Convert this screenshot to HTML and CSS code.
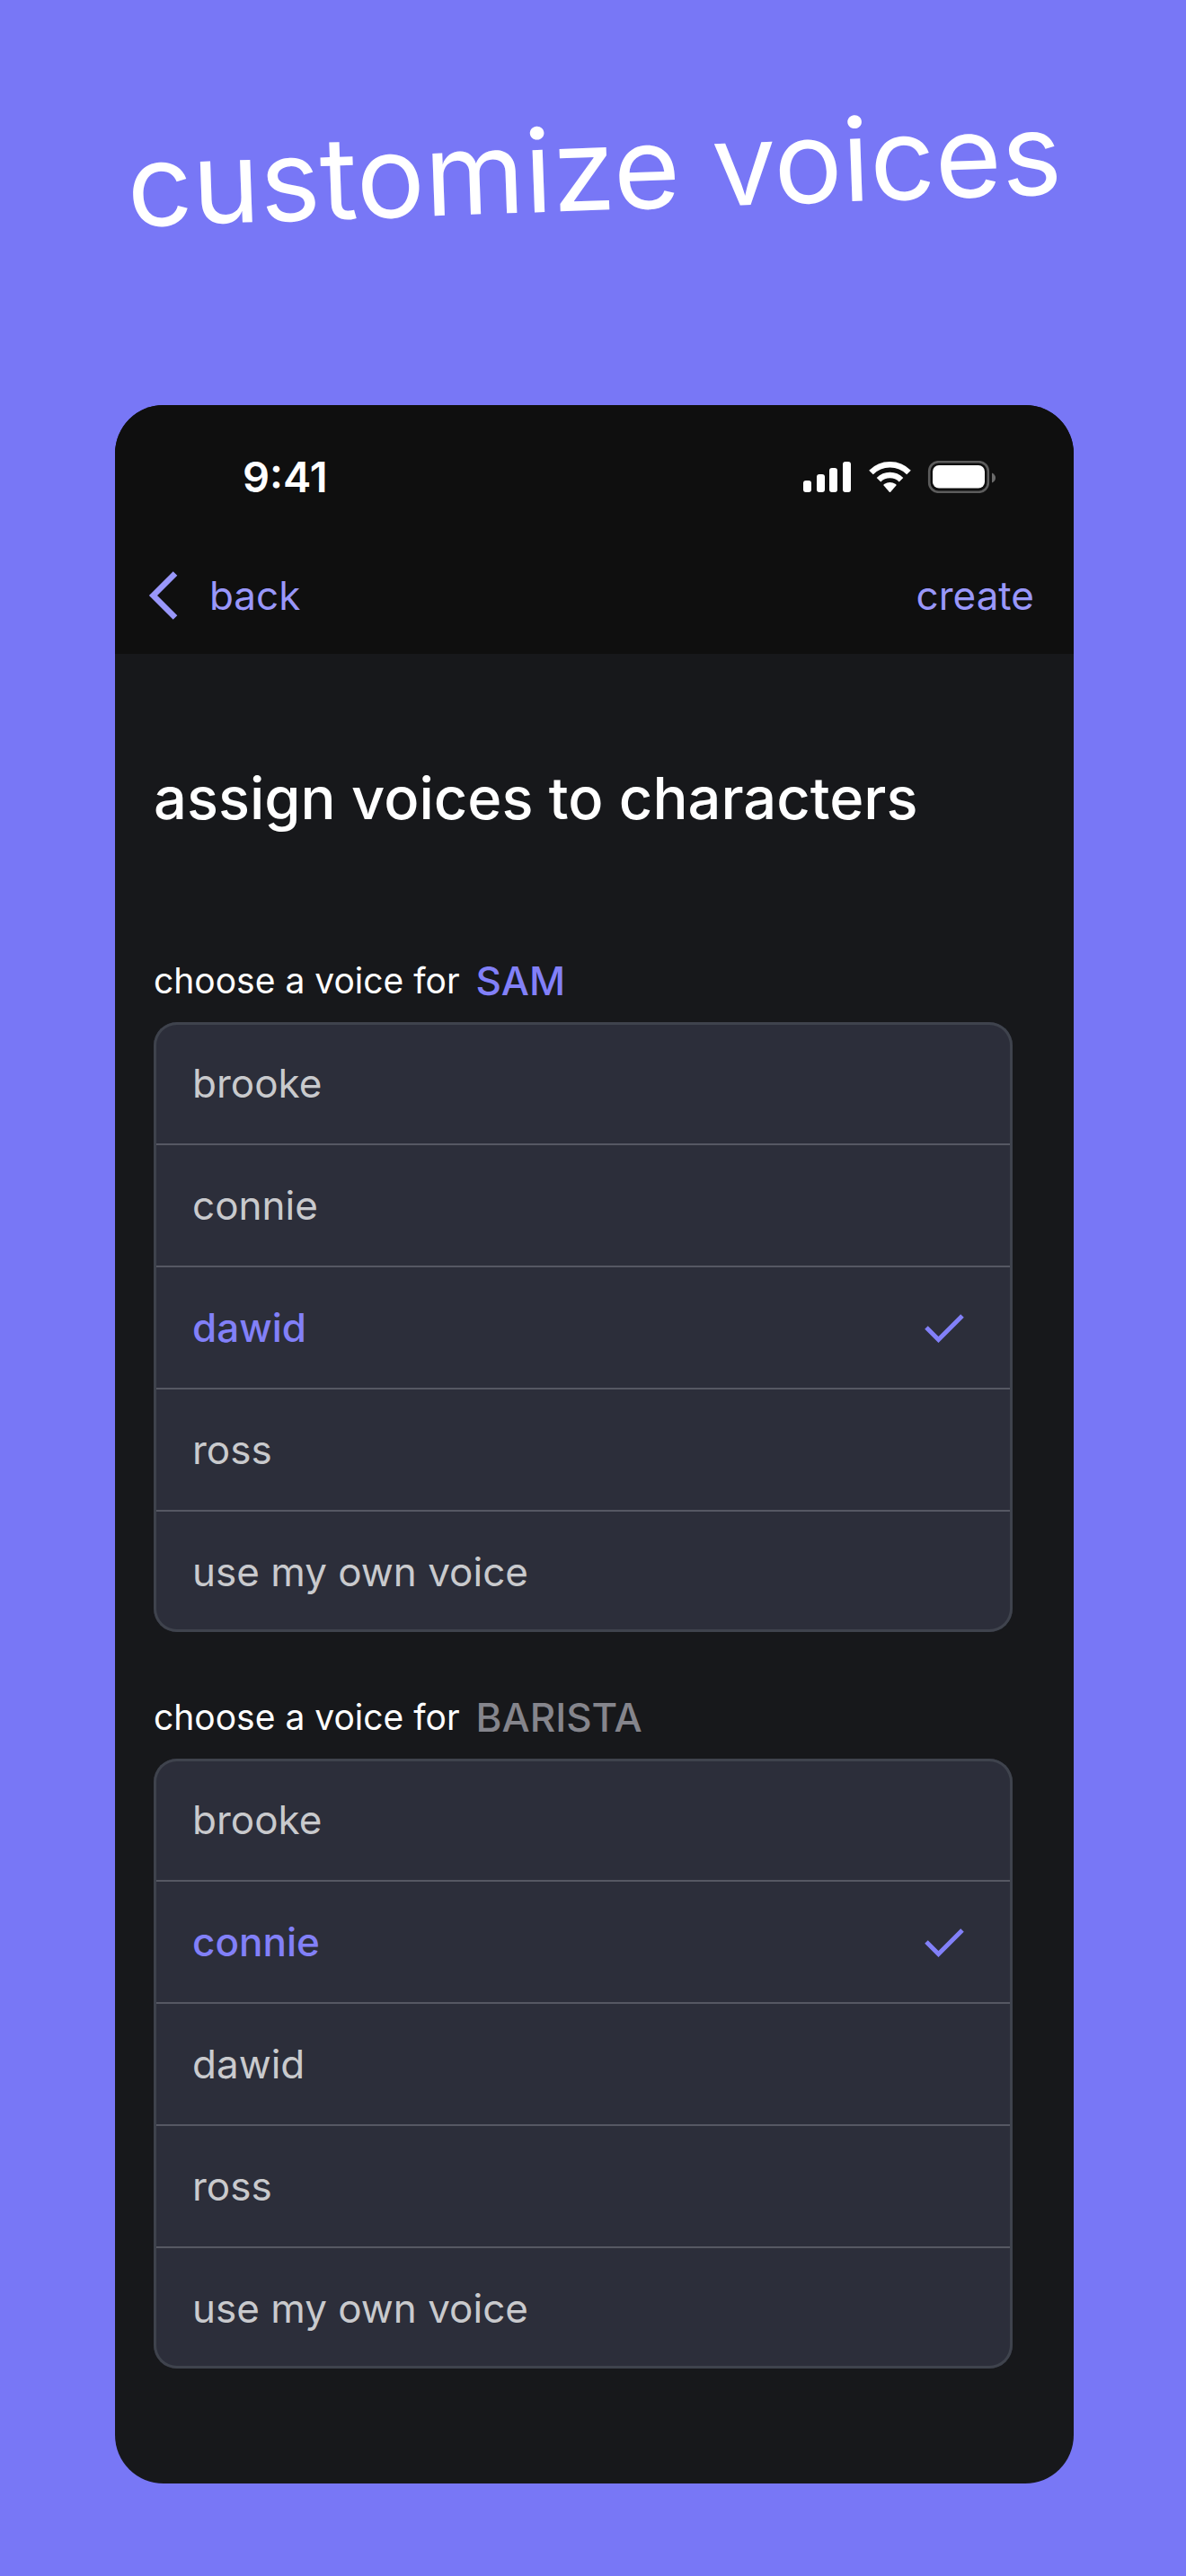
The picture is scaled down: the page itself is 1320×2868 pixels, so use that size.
FILE: index.html
```html
<!DOCTYPE html>
<html lang="en">
<head>
<meta charset="UTF-8">
<meta name="viewport" content="width=device-width, initial-scale=1.0">
<title>customize voices</title>
<link rel="stylesheet" href="styles.css">
</head>
<body>

<h1 class="headline">customize voices</h1>

<main class="phone">
  <header class="topbar">
    <div class="status">
      <span class="time">9:41</span>
      <svg class="status-icons" width="214" height="36" viewBox="0 0 214 36" aria-hidden="true">
        <g fill="#fff">
          <rect x="0" y="22" width="9" height="13" rx="3"/>
          <rect x="15" y="15" width="9" height="20" rx="3"/>
          <rect x="29" y="8" width="9" height="27" rx="3"/>
          <rect x="44" y="1" width="9" height="34" rx="3"/>
        </g>
        <g fill="none" stroke="#fff" stroke-width="6.5">
          <path d="M75.500 13A29.500 29.500 0 0 1 117.500 13"/>
          <path d="M84 21.200A17.800 17.800 0 0 1 109 21.200"/>
        </g>
        <path d="M89.600 27.500Q89 26.800 90 26.100Q96.500 22 103 26.100Q104 26.800 103.400 27.500L97.200 34.700Q96.500 35.500 95.800 34.700Z" fill="#fff"/>
        <rect x="140.200" y="1.200" width="65.600" height="33.600" rx="10.500" fill="none" stroke="#5c5c5c" stroke-width="2.600"/>
        <rect x="144" y="5" width="58" height="25.500" rx="7" fill="#fff"/>
        <path d="M210 13.500Q214 15.500 214 19Q214 22.500 210 24.500Z" fill="#6b6b6b"/>
      </svg>
    </div>
    <nav class="actions">
      <a class="action" href="#">
        <svg class="chevron" width="33" height="54" viewBox="0 0 33 54" aria-hidden="true">
          <path d="M30 2.500L5.500 27L30 51.500" fill="none" stroke="currentColor" stroke-width="6.500"/>
        </svg>
        back
      </a>
      <button type="submit" form="voices" class="action">create</button>
    </nav>
  </header>

  <form class="content" id="voices">
    <h2 class="title">assign voices to characters</h2>

    <fieldset class="group">
      <legend class="question">choose a voice for <span class="who active">SAM</span></legend>
      <ul class="voices">
        <li><label class="voice"><input type="radio" name="sam" value="brooke">brooke<svg class="check" width="44" height="34" viewBox="0 0 44 34" aria-hidden="true"><path d="M2 17L15.500 30.500L42 4"/></svg></label></li>
        <li><label class="voice"><input type="radio" name="sam" value="connie">connie<svg class="check" width="44" height="34" viewBox="0 0 44 34" aria-hidden="true"><path d="M2 17L15.500 30.500L42 4"/></svg></label></li>
        <li><label class="voice"><input type="radio" name="sam" value="dawid" checked>dawid<svg class="check" width="44" height="34" viewBox="0 0 44 34" aria-hidden="true"><path d="M2 17L15.500 30.500L42 4"/></svg></label></li>
        <li><label class="voice"><input type="radio" name="sam" value="ross">ross<svg class="check" width="44" height="34" viewBox="0 0 44 34" aria-hidden="true"><path d="M2 17L15.500 30.500L42 4"/></svg></label></li>
        <li><label class="voice"><input type="radio" name="sam" value="own">use my own voice<svg class="check" width="44" height="34" viewBox="0 0 44 34" aria-hidden="true"><path d="M2 17L15.500 30.500L42 4"/></svg></label></li>
      </ul>
    </fieldset>

    <fieldset class="group">
      <legend class="question">choose a voice for <span class="who">BARISTA</span></legend>
      <ul class="voices">
        <li><label class="voice"><input type="radio" name="barista" value="brooke">brooke<svg class="check" width="44" height="34" viewBox="0 0 44 34" aria-hidden="true"><path d="M2 17L15.500 30.500L42 4"/></svg></label></li>
        <li><label class="voice"><input type="radio" name="barista" value="connie" checked>connie<svg class="check" width="44" height="34" viewBox="0 0 44 34" aria-hidden="true"><path d="M2 17L15.500 30.500L42 4"/></svg></label></li>
        <li><label class="voice"><input type="radio" name="barista" value="dawid">dawid<svg class="check" width="44" height="34" viewBox="0 0 44 34" aria-hidden="true"><path d="M2 17L15.500 30.500L42 4"/></svg></label></li>
        <li><label class="voice"><input type="radio" name="barista" value="ross">ross<svg class="check" width="44" height="34" viewBox="0 0 44 34" aria-hidden="true"><path d="M2 17L15.500 30.500L42 4"/></svg></label></li>
        <li><label class="voice"><input type="radio" name="barista" value="own">use my own voice<svg class="check" width="44" height="34" viewBox="0 0 44 34" aria-hidden="true"><path d="M2 17L15.500 30.500L42 4"/></svg></label></li>
      </ul>
    </fieldset>
  </form>
</main>

</body>
</html>
```
FILE: styles.css
```css
* {
  box-sizing: border-box;
}
body {
  margin: 0;
  padding: 108px 125px 103px 128px;
  background-color: #7877f6;
  color: #fff;
  font-family: Inter, sans-serif;
  font-size: 44px;
  line-height: 56px;
  font-optical-sizing: none;
}
.headline {
  margin: 0 0 183px;
  font-size: 127px;
  font-weight: 400;
  line-height: 160px;
  text-align: center;
  white-space: nowrap;
  transform: rotate(-2deg);
}
.phone {
  border-radius: 54px;
  background-color: #17181b;
  overflow: hidden;
}

/* status bar and navigation */
.topbar {
  padding: 52px 44px 37px 37px;
  background-color: #0f0f0f;
}
.status {
  display: flex;
  align-items: center;
  justify-content: space-between;
  padding: 0 43px 0 105px;
}
.time {
  font-size: 47px;
  font-weight: 600;
}
.actions {
  display: flex;
  align-items: center;
  justify-content: space-between;
  margin-top: 76px;
}
.action {
  display: flex;
  align-items: center;
  gap: 35px;
  padding: 0;
  border: 0;
  background: none;
  color: #9997fa;
  font: inherit;
  text-decoration: none;
  cursor: pointer;
}

/* voice lists */
.content {
  padding: 127px 68px 128px 43px;
}
.title {
  margin: 0 0 149px;
  font-size: 65px;
  font-weight: 500;
  line-height: 68px;
}
.group {
  min-width: 0;
  margin: 0 0 75px;
  padding: 0;
  border: 0;
}
.group:last-child {
  margin-bottom: 0;
}
.question {
  display: flex;
  align-items: center;
  gap: 18px;
  margin-bottom: 26px;
  padding: 0;
  font-size: 39px;
  line-height: 40px;
}
.who {
  color: #85858c;
  font-size: 44px;
  font-weight: 500;
}
.who.active {
  color: #8280f8;
}
.voices {
  margin: 0;
  padding: 0 3px;
  border-radius: 26px;
  background-color: #2c2e3a;
  box-shadow: inset 0 0 0 3px #3f434d;
  list-style: none;
}
.voices li + li {
  border-top: 2px solid #565863;
}
.voice {
  display: flex;
  align-items: center;
  padding: 40px 51px 39px 40px;
  color: #c9cacd;
  cursor: pointer;
}
.voices li + li .voice {
  padding-top: 39px;
}
.voice input {
  appearance: none;
  width: 0;
  height: 0;
  margin: 0;
}
.voice:has(input:checked) {
  color: #8280f8;
  font-weight: 500;
}
.check {
  display: none;
  margin-left: auto;
  fill: none;
  stroke: currentColor;
  stroke-width: 5;
}
input:checked + .check {
  display: block;
}
```
